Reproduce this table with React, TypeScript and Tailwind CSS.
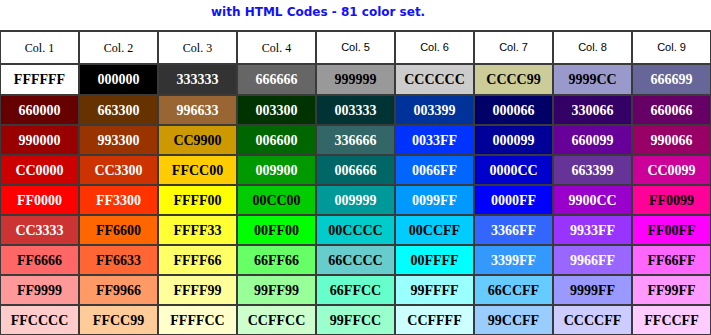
import React from "react";

type Cell = [string, boolean]; // code, white text

const rows: Cell[][] = [
  [["FFFFFF", false], ["000000", true], ["333333", true], ["666666", true], ["999999", false], ["CCCCCC", false], ["CCCC99", false], ["9999CC", false], ["666699", true]],
  [["660000", true], ["663300", true], ["996633", true], ["003300", true], ["003333", true], ["003399", true], ["000066", true], ["330066", true], ["660066", true]],
  [["990000", true], ["993300", true], ["CC9900", false], ["006600", true], ["336666", true], ["0033FF", true], ["000099", true], ["660099", true], ["990066", true]],
  [["CC0000", true], ["CC3300", true], ["FFCC00", false], ["009900", true], ["006666", true], ["0066FF", true], ["0000CC", true], ["663399", true], ["CC0099", true]],
  [["FF0000", true], ["FF3300", true], ["FFFF00", false], ["00CC00", false], ["009999", true], ["0099FF", true], ["0000FF", true], ["9900CC", true], ["FF0099", false]],
  [["CC3333", true], ["FF6600", false], ["FFFF33", false], ["00FF00", false], ["00CCCC", false], ["00CCFF", false], ["3366FF", true], ["9933FF", true], ["FF00FF", false]],
  [["FF6666", false], ["FF6633", false], ["FFFF66", false], ["66FF66", false], ["66CCCC", false], ["00FFFF", false], ["3399FF", true], ["9966FF", true], ["FF66FF", false]],
  [["FF9999", false], ["FF9966", false], ["FFFF99", false], ["99FF99", false], ["66FFCC", false], ["99FFFF", false], ["66CCFF", false], ["9999FF", false], ["FF99FF", false]],
  [["FFCCCC", false], ["FFCC99", false], ["FFFFCC", false], ["CCFFCC", false], ["99FFCC", false], ["CCFFFF", false], ["99CCFF", false], ["CCCCFF", false], ["FFCCFF", false]],
];

export default function App() {
  return (
    <div className="w-[711px] h-[335px] overflow-hidden bg-white">
      <div className="h-[30px] pl-[211px] pt-[5px] text-[12px] leading-[15px] font-bold text-[#1010ff] [font-family:'DejaVu_Sans',sans-serif]">
        with HTML Codes - 81 color set.
      </div>
      <div className="grid grid-cols-9 gap-[2px] bg-[#3a3a3a] pt-[2px] px-[1px] pb-[2px] w-[711px]">
        {[1, 2, 3, 4, 5, 6, 7, 8, 9].map((n) => (
          <div
            key={n}
            className={
              "h-[31px] bg-white flex items-center justify-center text-black " +
              (n <= 4
                ? "text-[12px] [font-family:'Liberation_Serif',serif]"
                : "text-[11px] [font-family:'Liberation_Sans',sans-serif]")
            }
          >
            Col. {n}
          </div>
        ))}
        {rows.map((row, ri) =>
          row.map(([code, white]) => (
            <div
              key={ri + code}
              className={
                (ri === 0 ? "h-[29px] " : "h-[28px] ") +
                "flex items-center justify-center font-bold text-[14px] [font-family:'Liberation_Serif',serif] " +
                (white ? "text-white" : "text-black")
              }
              style={{ backgroundColor: "#" + code }}
            >
              {code}
            </div>
          ))
        )}
      </div>
    </div>
  );
}
